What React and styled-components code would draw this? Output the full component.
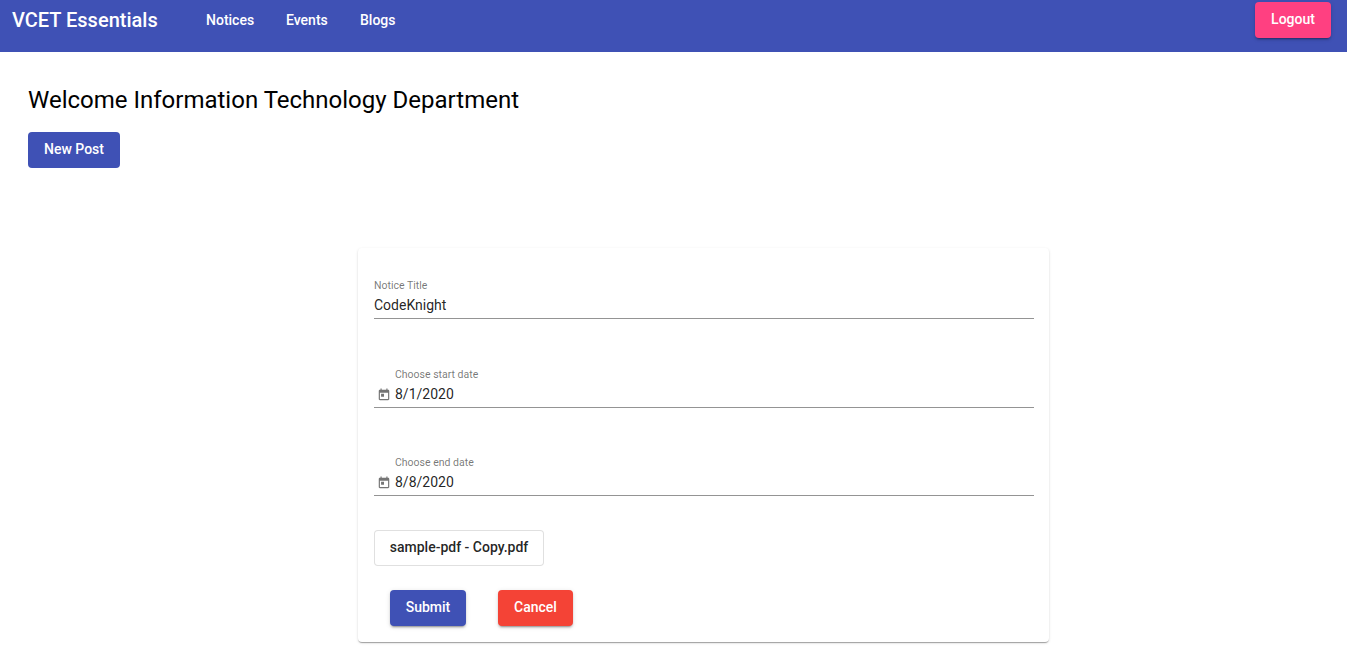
import React from "react";
import styled, { createGlobalStyle } from "styled-components";

const GlobalStyle = createGlobalStyle`
  *, *::before, *::after { box-sizing: border-box; }
  html, body { margin: 0; background: #fff; }
  body {
    height: 647px;
    overflow: hidden;
    font-family: Roboto, "Liberation Sans", sans-serif;
    font-size: 14px;
    color: rgba(0, 0, 0, 0.87);
  }
`;

const Page = styled.div`
  width: 1347px;
`;

const Toolbar = styled.header`
  display: flex;
  align-items: flex-start;
  height: 52px;
  padding: 2px 16px 0 12px;
  background: #3f51b5;
  color: #fff;
`;

const Brand = styled.h1`
  width: 146px;
  margin: 0 48px 0 0;
  font-size: 20px;
  font-weight: 500;
  line-height: 36px;
  white-space: nowrap;
`;

const Nav = styled.nav`
  display: flex;
  gap: 32px;
`;

const NavLink = styled.a`
  width: ${(p) => p.$width}px;
  color: inherit;
  font-weight: 500;
  line-height: 36px;
  white-space: nowrap;
`;

const tones = {
  primary: { bg: "#3f51b5", fg: "#fff" },
  accent: { bg: "#ff4081", fg: "#fff" },
  warn: { bg: "#f44336", fg: "#fff" },
};

const Button = styled.button`
  width: ${(p) => p.$width}px;
  height: 36px;
  padding: 0 0 2px;
  border: 0;
  border-radius: 4px;
  background: ${(p) => tones[p.$tone].bg};
  color: ${(p) => tones[p.$tone].fg};
  font: 500 14px/34px Roboto, "Liberation Sans", sans-serif;
  white-space: nowrap;
  box-shadow: ${(p) =>
    p.$flat
      ? "none"
      : "0 3px 1px -2px rgba(0,0,0,.2), 0 2px 2px 0 rgba(0,0,0,.14), 0 1px 5px 0 rgba(0,0,0,.12)"};
`;

const LogoutButton = styled(Button)`
  margin-left: auto;
`;

const FileButton = styled(Button)`
  display: block;
  border: 1px solid rgba(0, 0, 0, 0.12);
  background: #fff;
  color: rgba(0, 0, 0, 0.87);
  line-height: 32px;
`;

const Intro = styled.section`
  padding: 32px 28px 0;
`;

const Welcome = styled.h2`
  margin: 0 0 16px;
  color: #000;
  font-size: 24px;
  font-weight: 400;
  line-height: 32px;
`;

const Card = styled.section`
  width: 691px;
  height: 394px;
  margin: 80px 0 0 358px;
  padding: 30px 15px 16px 16px;
  border-radius: 4px;
  background: #fff;
  box-shadow: 0 2px 1px -1px rgba(0, 0, 0, 0.2), 0 1px 1px 0 rgba(0, 0, 0, 0.14),
    0 1px 3px 0 rgba(0, 0, 0, 0.12);
`;

const Field = styled.div`
  display: flex;
  align-items: flex-end;
  height: 41px;
  margin-bottom: ${(p) => p.$after}px;
  border-bottom: 1px solid #949494;
`;

const FieldIcon = styled.svg`
  flex: none;
  width: 14px;
  height: 14px;
  margin: 0 4px 5px 3px;
  fill: #757575;
`;

const FieldText = styled.label`
  display: flex;
  flex-direction: column;
  height: 40px;
`;

const Label = styled.span`
  height: 16px;
  color: rgba(0, 0, 0, 0.54);
  font-size: 10.5px;
  line-height: 16px;
`;

const Value = styled.span`
  line-height: 22px;
`;

const Actions = styled.div`
  display: flex;
  gap: 32px;
  padding: 24px 16px 0;
`;

function DateField({ label, value, after }) {
  return (
    <Field $after={after}>
      <FieldIcon viewBox="0 0 24 24">
        <path d="M19 3h-1V1h-2v2H8V1H6v2H5c-1.11 0-1.99.9-1.99 2L3 19c0 1.1.89 2 2 2h14c1.1 0 2-.9 2-2V5c0-1.1-.9-2-2-2zm0 16H5V8h14v11zM7 10h5v5H7z" />
      </FieldIcon>
      <FieldText>
        <Label>{label}</Label>
        <Value>{value}</Value>
      </FieldText>
    </Field>
  );
}

export default function App() {
  return (
    <Page>
      <GlobalStyle />
      <Toolbar>
        <Brand>VCET Essentials</Brand>
        <Nav>
          <NavLink $width={48}>Notices</NavLink>
          <NavLink $width={42}>Events</NavLink>
          <NavLink $width={36}>Blogs</NavLink>
        </Nav>
        <LogoutButton $tone="accent" $width={76}>Logout</LogoutButton>
      </Toolbar>
      <Intro>
        <Welcome>Welcome Information Technology Department</Welcome>
        <Button $tone="primary" $width={92} $flat>New Post</Button>
      </Intro>
      <Card>
        <Field $after={48}>
          <FieldText>
            <Label>Notice Title</Label>
            <Value>CodeKnight</Value>
          </FieldText>
        </Field>
        <DateField label="Choose start date" value="8/1/2020" after={47} />
        <DateField label="Choose end date" value="8/8/2020" after={34} />
        <FileButton $tone="primary" $width={170} $flat>sample-pdf - Copy.pdf</FileButton>
        <Actions>
          <Button $tone="primary" $width={76}>Submit</Button>
          <Button $tone="warn" $width={75}>Cancel</Button>
        </Actions>
      </Card>
    </Page>
  );
}
